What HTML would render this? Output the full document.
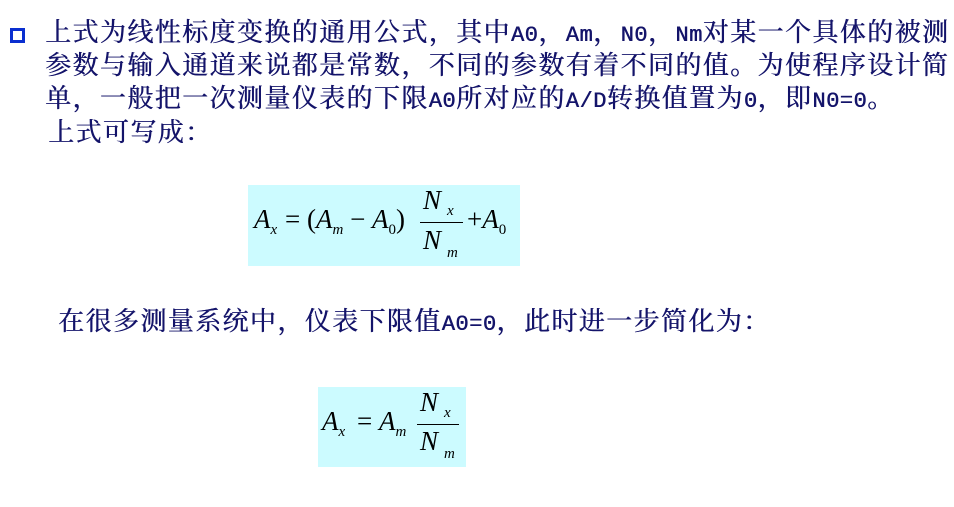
<!DOCTYPE html>
<html><head><meta charset="utf-8"><style>
body{margin:0;width:954px;height:507px;background:#fff;position:relative;overflow:hidden;font-family:"Liberation Sans","Noto Sans CJK SC",sans-serif;}
.t{position:absolute;white-space:nowrap;font-size:26px;letter-spacing:1.4px;color:#14146a;line-height:33px;font-family:"Noto Serif CJK SC","Noto Sans CJK SC",serif;text-shadow:0.5px 0 0 #14146a;}
.m{font-family:"Liberation Mono",monospace;font-size:22px;letter-spacing:0.5px;}
.bul{position:absolute;left:10px;top:28px;width:9px;height:9px;border:3px solid #0a2fd0;}
.box{position:absolute;background:#ccfbff;}
.f{position:absolute;font-family:"Liberation Serif",serif;color:#000;font-style:italic;white-space:nowrap;}
.s{font-size:15px;}
</style></head><body>
<div class="bul"></div>
<div class="t" style="left:45px;top:14px">上式为线性标度变换的通用公式，其中<span class="m">A0</span>，<span class="m">Am</span>，<span class="m">N0</span>，<span class="m">Nm</span>对某一个具体的被测</div>
<div class="t" style="left:45px;top:47px">参数与输入通道来说都是常数，不同的参数有着不同的值。为使程序设计简</div>
<div class="t" style="left:45px;top:80px">单，一般把一次测量仪表的下限<span class="m">A0</span>所对应的<span class="m">A/D</span>转换值置为<span class="m">0</span>，即<span class="m">N0=0</span>。</div>
<div class="t" style="left:48px;top:114px">上式可写成：</div>
<div class="t" style="left:58px;top:303px">在很多测量系统中，仪表下限值<span class="m">A0=0</span>，此时进一步简化为：</div>

<div class="box" style="left:248px;top:185px;width:272px;height:81px"></div>
<div class="f" style="left:254px;top:204px;font-size:27px">A<span class="s" style="position:relative;top:6px">x</span></div>
<div class="f" style="left:285px;top:204px;font-size:27px;font-style:normal">= (<i>A</i><span class="s" style="position:relative;top:6px"><i>m</i></span> − <i>A</i><span class="s" style="position:relative;top:6px">0</span>)</div>
<div class="f" style="left:423px;top:185px;font-size:27px">N<span class="s" style="position:relative;top:6px;margin-left:6px">x</span></div>
<div style="position:absolute;left:420px;top:222px;width:43px;height:1px;background:#000"></div>
<div class="f" style="left:423px;top:225px;font-size:27px">N<span class="s" style="position:relative;top:8px;margin-left:6px">m</span></div>
<div class="f" style="left:467px;top:204px;font-size:27px;font-style:normal">+<i>A</i><span class="s" style="position:relative;top:6px">0</span></div>

<div class="box" style="left:318px;top:387px;width:148px;height:80px"></div>
<div class="f" style="left:322px;top:406px;font-size:27px">A<span class="s" style="position:relative;top:6px">x</span></div>
<div class="f" style="left:357px;top:406px;font-size:27px;font-style:normal">= <i>A</i><span class="s" style="position:relative;top:6px"><i>m</i></span></div>
<div class="f" style="left:420px;top:387px;font-size:27px">N<span class="s" style="position:relative;top:6px;margin-left:6px">x</span></div>
<div style="position:absolute;left:417px;top:424px;width:42px;height:1px;background:#000"></div>
<div class="f" style="left:420px;top:426px;font-size:27px">N<span class="s" style="position:relative;top:8px;margin-left:6px">m</span></div>
</body></html>
